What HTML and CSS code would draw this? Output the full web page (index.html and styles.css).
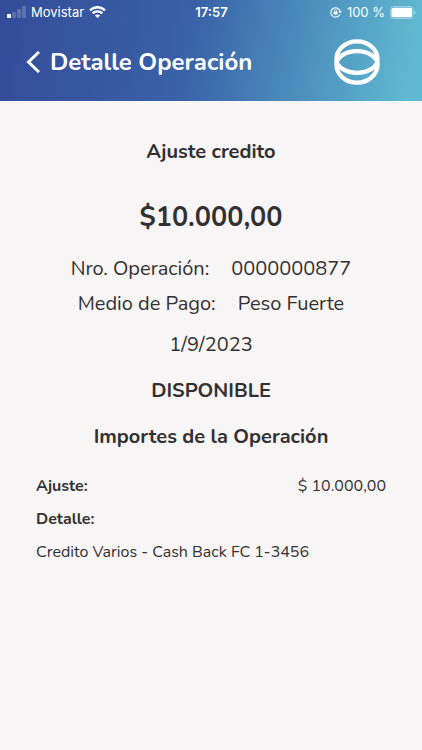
FILE: index.html
```html
<!DOCTYPE html>
<html lang="es">
<head>
    <meta charset="UTF-8">
    <meta name="viewport" content="width=device-width, initial-scale=1.0">
    <title>Detalle Operación</title>
    <link rel="stylesheet" href="styles.css">
</head>
<body>
    <header class="header">
        <div class="status-bar">
            <div class="status-left">
                <svg class="signal" width="19" height="12" viewBox="0 0 19 12" fill="#fff">
                    <rect x="0" y="8" width="4" height="4" rx="1"/>
                    <rect x="5" y="6" width="4" height="6" rx="1" opacity=".2"/>
                    <rect x="10" y="3" width="4" height="9" rx="1" opacity=".2"/>
                    <rect x="15" y="0" width="4" height="12" rx="1" opacity=".2"/>
                </svg>
                <span>Movistar</span>
                <svg width="17" height="12" viewBox="0 0 17 12" fill="none" stroke="#fff" stroke-width="2.4">
                    <path d="M1 4.4C5.200 .1 11.800 .1 16 4.400"/>
                    <path d="M3.700 7.400C6.400 4.700 10.600 4.700 13.300 7.400"/>
                    <path d="M8.500 12L5.900 9.500C7.300 8.200 9.700 8.200 11.100 9.500Z" fill="#fff" stroke="none"/>
                </svg>
            </div>
            <span class="time">17:57</span>
            <div class="status-right">
                <svg width="12" height="12" viewBox="0 0 12 12" fill="none" stroke="#fff">
                    <path d="M9.800 8.500A4.700 4.700 0 1 1 10.200 5.500" stroke-width="1.100"/>
                    <path d="M8.500 5.200H12L10.300 7.500Z" fill="#fff" stroke="none"/>
                    <rect x="3.500" y="5.400" width="4" height="3" rx=".4" fill="#fff" stroke="none"/>
                    <path d="M4.400 5.500V4.600a1.100 1.100 0 0 1 2.200 0V5.500" stroke-width=".8"/>
                </svg>
                <span>100 %</span>
                <svg width="26" height="13" viewBox="0 0 26 13" fill="#fff">
                    <rect x=".5" y=".5" width="22.500" height="12" rx="3" fill="none" stroke="#fff" opacity=".4"/>
                    <rect x="1.500" y="1.700" width="20.500" height="9.600" rx="1.800"/>
                    <path d="M24.300 4.500q1.500 .5 1.500 2t-1.500 2z" opacity=".4"/>
                </svg>
            </div>
        </div>
        <div class="title-bar">
            <button class="back" type="button" aria-label="Volver">
                <svg width="14" height="22" viewBox="0 0 14 22" fill="none" stroke="#fff" stroke-width="3">
                    <path d="M13 1L2.500 11L13 21"/>
                </svg>
            </button>
            <h1>Detalle Operación</h1>
            <svg class="logo" width="46" height="46" viewBox="0 0 46 46" fill="none" stroke="#fff" stroke-width="4.300">
                <path d="M2.400 20.500A20.600 18.200 0 0 1 43.600 20.500A20.600 13.300 0 0 1 2.400 20.500Z"/>
                <path d="M2.400 25.500A20.600 18.200 0 0 0 43.600 25.500A20.600 13.300 0 0 0 2.400 25.500Z"/>
            </svg>
        </div>
    </header>
    <main class="content">
        <h2>Ajuste credito</h2>
        <p class="amount">$10.000,00</p>
        <p class="line"><span>Nro. Operación:</span><span>0000000877</span></p>
        <p class="line"><span>Medio de Pago:</span><span>Peso Fuerte</span></p>
        <p class="date">1/9/2023</p>
        <p class="state">DISPONIBLE</p>
        <h2>Importes de la Operación</h2>
        <dl class="details">
            <div class="row">
                <dt>Ajuste:</dt>
                <dd>$ 10.000,00</dd>
            </div>
            <div>
                <dt>Detalle:</dt>
                <dd>Credito Varios - Cash Back FC 1-3456</dd>
            </div>
        </dl>
    </main>
</body>
</html>
```
FILE: styles.css
```css
* {
    box-sizing: border-box;
}
body {
    margin: 0;
    min-height: 100vh;
    background: #f7f5f6;
    color: #333031;
    font-family: Nunito, Lato, sans-serif;
}
h1, h2, p, dl, dd {
    margin: 0;
}
.header {
    background: linear-gradient(100deg, #344c99 0%, #3962a8 45%, #5fb9d0 96%);
    color: #fff;
}
.status-bar {
    display: grid;
    grid-template-columns: 1fr auto 1fr;
    align-items: center;
    height: 24px;
    padding: 0 6px 0 7px;
    font-family: Inter, sans-serif;
    font-size: 13px;
}
.status-left,
.status-right {
    display: flex;
    align-items: center;
    gap: 5px;
}
.status-right {
    justify-content: flex-end;
}
.time {
    font-weight: 600;
}
.title-bar {
    display: flex;
    align-items: center;
    height: 77px;
    padding: 0 42px 1px 26px;
}
.back {
    display: flex;
    padding: 0;
    border: none;
    background: none;
    color: inherit;
    cursor: pointer;
}
h1 {
    flex: 1;
    margin-left: 10px;
    font-size: 24px;
    font-weight: 700;
}
.content {
    padding: 36px;
    text-align: center;
    font-size: 20px;
    line-height: 30px;
}
h2,
.state {
    font-size: 20px;
    font-weight: 700;
}
.amount {
    margin: 31px 0 16px;
    font-size: 27px;
    font-weight: 700;
    line-height: 40px;
}
.line {
    display: flex;
    justify-content: center;
    gap: 22px;
    margin-bottom: 5px;
}
.date {
    margin-top: 11px;
}
.state {
    margin: 16px 0;
}
.details {
    margin-top: 18px;
    text-align: left;
    font-size: 16px;
    line-height: 33px;
}
.row {
    display: flex;
    justify-content: space-between;
}
dt {
    font-weight: 700;
}
```
